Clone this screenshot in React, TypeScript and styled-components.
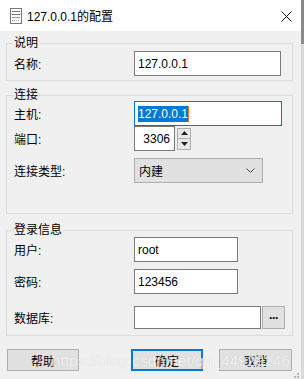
import { createGlobalStyle, styled } from "styled-components";

const GlobalStyle = createGlobalStyle`
  html, body {
    margin: 0;
    padding: 0;
    background: #f0f0f0;
  }
  body {
    font-family: "Liberation Sans", "Noto Sans CJK SC", sans-serif;
    font-size: 12px;
    color: #000;
  }
`;

function App() {
  return (
    <StPage>
      <GlobalStyle />
      <StDialog>
        <StTitleBar>
          <StAppIcon width="12" height="16" viewBox="0 0 12 16">
            <rect x="0.5" y="0.5" width="11" height="15" fill="#fff" stroke="#777" />
            <line x1="2" y1="3.5" x2="10" y2="3.5" stroke="#777" />
            <line x1="2" y1="6.5" x2="10" y2="6.5" stroke="#777" />
            <line x1="2" y1="9.5" x2="10" y2="9.5" stroke="#999" />
            <line x1="2" y1="12.5" x2="10" y2="12.5" stroke="#aaa" strokeDasharray="1 1" />
          </StAppIcon>
          <StTitle>127.0.0.1的配置</StTitle>
          <StClose width="11" height="11" viewBox="0 0 11 11">
            <path d="M0.5 0.5 L10.5 10.5 M10.5 0.5 L0.5 10.5" stroke="#111" strokeWidth="1" />
          </StClose>
        </StTitleBar>

        <StGroup $mt={12} $pb={4}>
          <StLegend>说明</StLegend>
          <StRow>
            <StLabel>名称:</StLabel>
            <StInput $w={147}>127.0.0.1</StInput>
          </StRow>
        </StGroup>

        <StGroup $mt={14} $pb={30}>
          <StLegend>连接</StLegend>
          <StRow $mt={-2}>
            <StLabel>主机:</StLabel>
            <StInput $w={148} $focused>
              <StSelected>127.0.0.1</StSelected>
              <StCaret />
            </StInput>
          </StRow>
          <StRow>
            <StLabel>端口:</StLabel>
            <StInput $w={41} $right>3306</StInput>
            <StSpinner>
              <StSpinButton>
                <svg width="7" height="4" viewBox="0 0 7 4">
                  <path d="M3.5 0 L7 4 L0 4 Z" fill="#222" />
                </svg>
              </StSpinButton>
              <StSpinButton>
                <svg width="7" height="4" viewBox="0 0 7 4">
                  <path d="M0 0 L7 0 L3.5 4 Z" fill="#222" />
                </svg>
              </StSpinButton>
            </StSpinner>
          </StRow>
          <StRow $mt={7}>
            <StLabel>连接类型:</StLabel>
            <StSelect>
              <span>内建</span>
              <svg width="9" height="5" viewBox="0 0 9 5">
                <path d="M0.5 0.5 L4.5 4.5 L8.5 0.5" fill="none" stroke="#444" />
              </svg>
            </StSelect>
          </StRow>
        </StGroup>

        <StGroup $mt={16} $pb={6}>
          <StLegend>登录信息</StLegend>
          <StRow $mt={-1}>
            <StLabel>用户:</StLabel>
            <StInput $w={104}>root</StInput>
          </StRow>
          <StRow $mt={7}>
            <StLabel>密码:</StLabel>
            <StInput $w={104}>123456</StInput>
          </StRow>
          <StRow $mt={12} $h={23}>
            <StLabel>数据库:</StLabel>
            <StInput $w={127}></StInput>
            <StDotsButton>···</StDotsButton>
          </StRow>
        </StGroup>

        <StButtonBar>
          <StButton>帮助</StButton>
          <StButton $primary $ml={52}>
            确定
          </StButton>
          <StButton $ml={16} $w={73}>
            取消
          </StButton>
        </StButtonBar>

        <StWatermark>https://blog.csdn.net/qq_44929246</StWatermark>
        <StGrip width="5" height="5" viewBox="0 0 5 5">
          <rect x="3" y="0" width="2" height="2" fill="#b8b8b8" />
          <rect x="0" y="3" width="2" height="2" fill="#b8b8b8" />
          <rect x="3" y="3" width="2" height="2" fill="#b8b8b8" />
        </StGrip>
      </StDialog>
      <StEdge />
    </StPage>
  );
}

export default App;

const StPage = styled.div`
  display: flex;
  width: 304px;
  height: 379px;
  overflow: hidden;
`;

const StDialog = styled.div`
  position: relative;
  width: 301px;
  height: 379px;
  background: #f0f0f0;
`;

const StEdge = styled.div`
  width: 3px;
  height: 379px;
  background: linear-gradient(#8a8a8a 0, #8a8a8a 44px, #dadada 44px, #dadada 100%);
`;

const StTitleBar = styled.div`
  display: flex;
  align-items: center;
  height: 31px;
  padding-left: 10px;
  background: #fff;
`;

const StAppIcon = styled.svg`
  flex: none;
  margin-top: 1px;
`;

const StTitle = styled.span`
  margin-left: 5px;
  flex: 1;
  font-size: 12px;
  color: #000;
`;

const StClose = styled.svg`
  margin-right: 9px;
  margin-top: 1px;
`;

const StGroup = styled.div<{ $mt: number; $pb: number }>`
  display: flex;
  flex-direction: column;
  width: 287px;
  box-sizing: border-box;
  margin: ${(p) => p.$mt}px 0 0 6px;
  padding: 0 0 ${(p) => p.$pb}px 7px;
  border: 1px solid #dcdcdc;
`;

const StLegend = styled.span`
  align-self: flex-start;
  margin: -9px 0 0 0;
  padding: 0 1px 0 0;
  line-height: 16px;
  background: #f0f0f0;
`;

const StRow = styled.div<{ $mt?: number; $h?: number }>`
  display: flex;
  align-items: center;
  height: ${(p) => p.$h ?? 25}px;
  margin-top: ${(p) => p.$mt ?? 0}px;
`;

const StLabel = styled.span`
  width: 120px;
  flex: none;
`;

const StInput = styled.div<{ $w: number; $focused?: boolean; $right?: boolean }>`
  display: flex;
  align-items: center;
  justify-content: ${(p) => (p.$right ? "flex-end" : "flex-start")};
  box-sizing: border-box;
  width: ${(p) => p.$w}px;
  height: 100%;
  padding: 0 ${(p) => (p.$right ? 4 : 3)}px 0 3px;
  background: #fff;
  border: 1px solid ${(p) => (p.$focused ? "#0078d7" : "#7a7a7a")};
`;

const StSelected = styled.span`
  background: #0078d7;
  color: #fff;
  line-height: 16px;
`;

const StCaret = styled.span`
  width: 1px;
  height: 16px;
  background: #e2761c;
`;

const StSpinner = styled.div`
  display: flex;
  flex-direction: column;
  margin-left: 2px;
  height: 22px;
`;

const StSpinButton = styled.div`
  display: flex;
  align-items: center;
  justify-content: center;
  width: 14px;
  height: 11px;
  box-sizing: border-box;
  background: #e8e8e8;
  border: 1px solid #adadad;
  & + & {
    border-top: none;
  }
`;

const StSelect = styled.div`
  display: flex;
  align-items: center;
  justify-content: space-between;
  box-sizing: border-box;
  width: 129px;
  height: 100%;
  padding: 0 7px 0 4px;
  background: #e1e1e1;
  border: 1px solid #adadad;
`;

const StDotsButton = styled.div`
  display: flex;
  align-items: center;
  justify-content: center;
  box-sizing: border-box;
  width: 23px;
  height: 23px;
  margin-left: 1px;
  font-size: 12px;
  font-weight: bold;
  letter-spacing: -1px;
  background: #e1e1e1;
  border: 1px solid #adadad;
`;

const StButtonBar = styled.div`
  display: flex;
  margin-top: 13px;
  padding-left: 7px;
`;

const StButton = styled.div<{ $primary?: boolean; $ml?: number; $w?: number }>`
  display: flex;
  align-items: center;
  justify-content: center;
  box-sizing: border-box;
  width: ${(p) => p.$w ?? 72}px;
  height: 22px;
  margin-left: ${(p) => p.$ml ?? 0}px;
  background: #e1e1e1;
  border: ${(p) => (p.$primary ? "2px solid #0078d7" : "1px solid #adadad")};
`;

const StWatermark = styled.div`
  position: absolute;
  left: 52px;
  top: 351px;
  font-family: "Liberation Sans", sans-serif;
  font-size: 15.5px;
  line-height: 20px;
  color: rgba(255, 255, 255, 0.8);
  text-shadow: 0 0 1px rgba(0, 0, 0, 0.18);
  white-space: nowrap;
  pointer-events: none;
`;

const StGrip = styled.svg`
  position: absolute;
  right: 2px;
  bottom: 1px;
`;
